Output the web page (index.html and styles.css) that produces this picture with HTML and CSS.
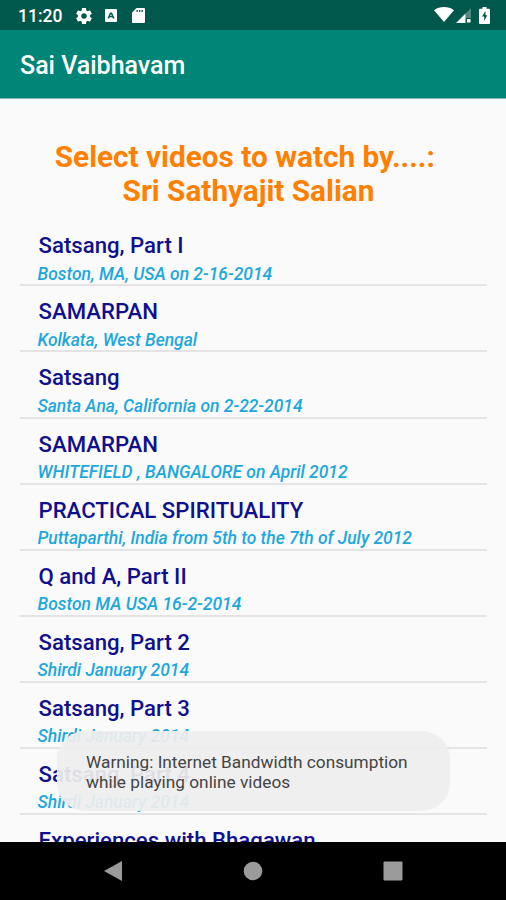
FILE: index.html
```html
<!DOCTYPE html>
<html lang="en">
<head>
  <meta charset="UTF-8">
  <meta name="viewport" content="width=device-width, initial-scale=1">
  <title>Sai Vaibhavam</title>
  <link rel="stylesheet" href="styles.css">
</head>
<body>
  <div class="status-bar">
    <span class="clock">11:20</span>
    <svg class="icon gear" viewBox="2 2 20 20"><path d="M19.43 12.98c.04-.32.07-.64.07-.98s-.03-.66-.07-.98l2.11-1.65c.19-.15.24-.42.12-.64l-2-3.46c-.12-.22-.39-.3-.61-.22l-2.49 1c-.52-.4-1.08-.73-1.69-.98l-.38-2.65C14.46 2.18 14.25 2 14 2h-4c-.25 0-.46.18-.49.42l-.38 2.65c-.61.25-1.17.59-1.69.98l-2.49-1c-.23-.09-.49 0-.61.22l-2 3.46c-.13.22-.07.49.12.64l2.11 1.65c-.04.32-.07.65-.07.98s.03.66.07.98l-2.11 1.65c-.19.15-.24.42-.12.64l2 3.46c.12.22.39.3.61.22l2.49-1c.52.4 1.08.73 1.69.98l.38 2.65c.03.24.24.42.49.42h4c.25 0 .46-.18.49-.42l.38-2.65c.61-.25 1.17-.59 1.69-.98l2.49 1c.23.09.49 0 .61-.22l2-3.46c.12-.22.07-.49-.12-.64l-2.11-1.65zM12 15.5c-1.93 0-3.5-1.57-3.5-3.5s1.57-3.5 3.5-3.5 3.5 1.57 3.5 3.5-1.57 3.5-3.5 3.5z"/></svg>
    <svg class="icon keyboard" viewBox="0 0 12 13"><rect width="12" height="13" rx="1"/><path class="cut" d="M5 3.5h2l2.5 6H7.8l-.5-1.3H4.7l-.5 1.3H2.5z"/><path d="M6 5l.8 2H5.2z"/></svg>
    <svg class="icon sd-card" viewBox="0 0 13 15"><path d="M4.5 0H12a1 1 0 0 1 1 1v13a1 1 0 0 1-1 1H1a1 1 0 0 1-1-1V4.5z"/><path class="cut" d="M4.5 2h1.3v2H4.5zM7 2h1.3v2H7zM9.5 2h1.3v2H9.5z"/></svg>
    <svg class="icon wifi" viewBox="0 0 20 15"><path d="M0 3.2C5.5-1 14.5-1 20 3.2L10 15z"/></svg>
    <svg class="icon signal" viewBox="0 0 15 15"><path class="faint" d="M15 0v10H9.5V5.5z"/><path d="M9.5 5.5V15H0zM11 11h3.5v3.5H11z"/></svg>
    <svg class="icon battery" viewBox="0 0 11 17"><path d="M3.5 0h4v1.7H10a1 1 0 0 1 1 1V16a1 1 0 0 1-1 1H1a1 1 0 0 1-1-1V2.7a1 1 0 0 1 1-1h2.5z"/><path class="cut" d="M6.5 4L3 9.5h2.2V14l3.1-5.7H6.5z"/></svg>
  </div>

  <div class="app-bar">Sai Vaibhavam</div>

  <div class="content">
    <h1>Select videos to watch by....:&nbsp;<br>Sri Sathyajit Salian</h1>
    <ul class="video-list">
      <li><h2>Satsang, Part I</h2><p>Boston, MA, USA on 2-16-2014</p></li>
      <li><h2>SAMARPAN</h2><p>Kolkata, West Bengal</p></li>
      <li><h2>Satsang</h2><p>Santa Ana, California on 2-22-2014</p></li>
      <li><h2>SAMARPAN</h2><p>WHITEFIELD , BANGALORE on April 2012</p></li>
      <li><h2>PRACTICAL SPIRITUALITY</h2><p>Puttaparthi, India from 5th to the 7th of July 2012</p></li>
      <li><h2>Q and A, Part II</h2><p>Boston MA USA 16-2-2014</p></li>
      <li><h2>Satsang, Part 2</h2><p>Shirdi January 2014</p></li>
      <li><h2>Satsang, Part 3</h2><p>Shirdi January 2014</p></li>
      <li><h2>Satsang, Part 4</h2><p>Shirdi January 2014</p></li>
      <li><h2>Experiences with Bhagawan</h2></li>
    </ul>
  </div>

  <div class="toast">Warning: Internet Bandwidth consumption<br>while playing online videos</div>

  <div class="nav-bar">
    <svg viewBox="0 0 20 22"><path d="M19 1v20L1 11z"/></svg>
    <svg viewBox="0 0 20 22"><circle cx="10" cy="11" r="9.3"/></svg>
    <svg viewBox="0 0 20 22"><rect x="0.5" y="1.5" width="19" height="19" rx="1"/></svg>
  </div>
</body>
</html>
```
FILE: styles.css
```css
html, body {
  height: 100%;
  margin: 0;
}
body {
  position: relative;
  display: flex;
  flex-direction: column;
  overflow: hidden;
  background: #fafafa;
  font-family: Roboto, sans-serif;
}
/* Status bar */
.status-bar {
  display: flex;
  align-items: center;
  flex: 0 0 30px;
  box-sizing: border-box;
  height: 30px;
  padding: 1px 16px 0 18px;
  background: #00574b;
  color: #fff;
}
.clock {
  width: 58px;
  font-size: 17.5px;
  font-weight: 500;
}
.icon {
  flex: none;
  fill: #fff;
}
.icon .cut {
  fill: #00574b;
}
.icon .faint {
  fill: #4d8981;
}
.gear {
  width: 16px;
  height: 16px;
}
.keyboard {
  width: 12px;
  height: 13px;
  margin-left: 13px;
}
.sd-card {
  width: 13px;
  height: 15px;
  margin-left: 15px;
}
.wifi {
  width: 20px;
  height: 15px;
  margin: 0 2px 3px auto;
}
.signal {
  width: 15px;
  height: 15px;
  margin-right: 8px;
}
.battery {
  width: 11px;
  height: 17px;
}
.app-bar {
  display: flex;
  align-items: center;
  flex: none;
  box-sizing: border-box;
  height: 69px;
  padding: 3px 0 0 20px;
  background: #008577;
  border-bottom: 1px solid #8fb8b3;
  color: #fff;
  font-size: 25px;
  font-weight: 500;
}
/* Video list */
.content {
  flex: 1;
  min-height: 0;
  overflow: hidden;
  padding: 41px 19px 0 20px;
}
h1 {
  margin: 0 10px 0 0;
  color: #ff8000;
  font-size: 29.75px;
  font-weight: 700;
  line-height: 34px;
  text-align: center;
  white-space: nowrap;
}
.video-list {
  margin: 12.4px 0 0;
  padding: 0;
  list-style: none;
}
.video-list li {
  box-sizing: border-box;
  height: 66.06px;
  padding: 12px 0 0 18.5px;
  border-bottom: 2px solid #e4e4e4;
  white-space: nowrap;
}
h2 {
  margin: 0;
  color: #10108c;
  font-size: 22.2px;
  font-weight: 500;
  line-height: 26px;
}
.video-list p {
  margin: 5.5px 0 0 -1px;
  color: #1ca8dd;
  font-size: 17.45px;
  font-style: italic;
  font-weight: 500;
  line-height: 20px;
}
/* Toast over the list */
.toast {
  position: absolute;
  top: 731px;
  left: 57px;
  box-sizing: border-box;
  width: 393px;
  height: 80px;
  padding: 21px 0 0 29px;
  border-radius: 28px;
  background: rgba(238, 238, 238, 0.93);
  color: #444;
  font-size: 17.25px;
  line-height: 20px;
  white-space: nowrap;
}
/* Navigation bar */
.nav-bar {
  display: flex;
  align-items: center;
  justify-content: center;
  gap: 120px;
  flex: 0 0 58px;
  background: #000;
}
.nav-bar svg {
  width: 20px;
  height: 22px;
  fill: #9b9b9b;
}
```
